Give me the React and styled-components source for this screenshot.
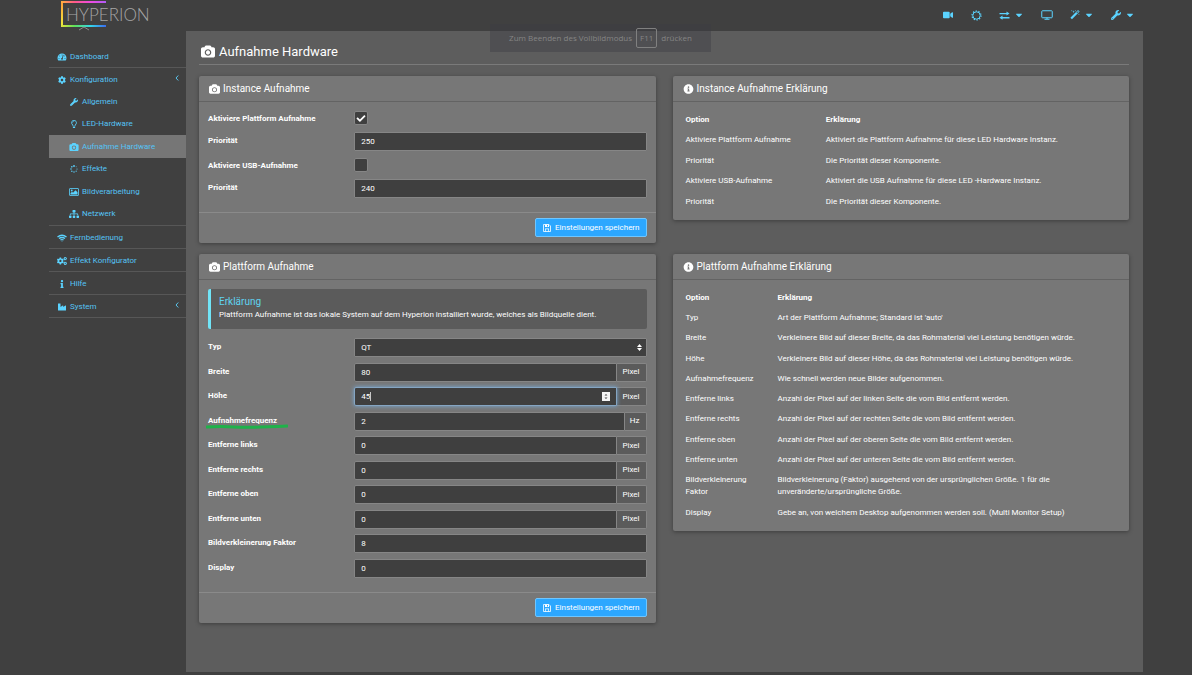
import { useState } from "react";
import styled, { createGlobalStyle, css } from "styled-components";
import {
  FaCaretDown,
  FaCheck,
  FaCog,
  FaCogs,
  FaIndustry,
  FaInfo,
  FaInfoCircle,
  FaRegLightbulb,
  FaSitemap,
  FaTachometerAlt,
  FaVideo,
  FaWrench,
} from "react-icons/fa";

const GlobalStyle = createGlobalStyle`
  * {
    box-sizing: border-box;
  }

  body {
    margin: 0;
    background: #ffffff;
    color: #ffffff;
    font: 8px/12px Roboto, "Liberation Sans", sans-serif;
  }

  button, input, select {
    font: inherit;
    color: inherit;
  }
`;

const Page = styled.div`
  display: flex;
  flex-direction: column;
  min-height: 100vh;
  margin-right: 8px;
  padding: 0 49px 3px;
  background: #404040;
`;

const Header = styled.header`
  display: flex;
  align-items: flex-start;
  justify-content: space-between;
  height: 31px;
  padding: 0 8px 0 11px;
`;

const TopNav = styled.nav`
  display: flex;
  align-items: center;
  gap: 17px;
  height: 30px;
`;

const TopButton = styled.button`
  display: flex;
  align-items: center;
  gap: 4px;
  min-width: 11px;
  padding: 0;
  border: 0;
  background: none;
  color: #5bd3ff;
  font-size: 10px;
  cursor: pointer;
`;

const Columns = styled.div`
  display: flex;
  flex: 1;
`;

const Sidebar = styled.nav`
  flex: 0 0 137px;
  padding-top: 14px;
`;

const Menu = styled.ul`
  margin: 0;
  padding: 0;
  list-style: none;
`;

const MenuItem = styled.li`
  border-bottom: 1px solid #575757;
`;

const SubMenu = styled(Menu)`
  display: grid;
  grid-auto-rows: 1fr;
  min-height: 135px;
`;

const MenuLink = styled.a`
  display: flex;
  align-items: center;
  gap: 3px;
  height: ${({ $sub }) => ($sub ? "100%" : "22px")};
  padding: 1px 7px 0 ${({ $sub }) => ($sub ? "20px" : "8px")};
  background: ${({ $active }) => ($active ? "#767676" : "none")};
  color: #55c3f5;
  text-decoration: none;

  > svg:first-child {
    width: 10px;
    height: 8px;
    color: #5bd3ff;
  }
`;

const MenuArrow = styled.svg`
  width: 4px;
  height: 6px;
  margin: 0 0 3px auto;
`;

const Content = styled.main`
  flex: 1;
  min-width: 0;
  padding: 11px 14px 14px 13px;
  background: #5d5d5d;
`;

const PageTitle = styled.h1`
  display: flex;
  align-items: center;
  gap: 4px;
  height: 23px;
  margin: 0 0 11px;
  padding: 0 2px 3px;
  border-bottom: 1px solid #7a7a7a;
  font-size: 13px;
  font-weight: 400;
  line-height: 18px;

  svg {
    width: 14px;
    height: 13px;
  }
`;

const Panels = styled.div`
  display: grid;
  grid-template-columns: 1fr 1fr;
  gap: 11px 17px;
  align-items: start;
`;

const Panel = styled.section`
  border-radius: 2px;
  background: #777777;
  box-shadow: 0 1px 4px rgba(0, 0, 0, 0.35);
`;

const PanelTitle = styled.h2`
  display: flex;
  align-items: center;
  gap: 3px;
  height: 26px;
  margin: 0;
  padding: 0 10px;
  border-bottom: 1px solid #636363;
  font-size: 10px;
  font-weight: 400;

  svg {
    width: 11px;
    height: 10px;
  }
`;

const PanelBody = styled.div`
  padding: ${({ $table }) => ($table ? "8px 9px" : "9px 9px 14px")};
`;

const PanelFooter = styled.div`
  display: flex;
  justify-content: flex-end;
  padding: 5px 9px 6px;
  border-top: 1px solid #8a8a8a;
`;

const SaveButton = styled.button`
  display: flex;
  align-items: center;
  gap: 3px;
  height: 19px;
  padding: 0 6px;
  border: 1px solid #6fc6ff;
  border-radius: 2px;
  background: #2ca7ff;
  cursor: pointer;
`;

const Callout = styled.div`
  margin-bottom: 9px;
  padding: 7px 8px;
  border-left: 3px solid #71e4f7;
  border-radius: 2px;
  background: #5b5b5b;

  h3 {
    margin: 0;
    color: #5fd3f0;
    font-size: 10px;
    font-weight: 400;
    line-height: 12px;
  }

  p {
    margin: 0;
    line-height: 14px;
  }
`;

const Fields = styled.div`
  display: flex;
  flex-direction: column;
  justify-content: space-between;
  gap: ${({ $tight }) => ($tight ? "5px" : "7px")};
  min-height: ${({ $tight }) => ($tight ? "240px" : "0")};
`;

const Row = styled.div`
  display: grid;
  grid-template-columns: 1fr 2fr;
  align-items: start;
`;

const boldText = css`
  font-weight: 700;
`;

const Label = styled.label`
  position: relative;
  justify-self: start;
  padding-top: ${({ $check }) => ($check ? "2px" : "3px")};
  ${boldText}
`;

const Marker = styled.svg`
  position: absolute;
  left: -2px;
  bottom: -3px;
  width: 82px;
  height: 6px;
`;

const Control = styled.div`
  position: relative;
  display: flex;
  height: 19px;
`;

const controlStyle = css`
  flex: 1;
  min-width: 0;
  height: 19px;
  padding: 0 6px;
  border: 1px solid #868686;
  border-radius: ${({ $joined }) => ($joined ? "2px 0 0 2px" : "1px")};
  background: #3f3f3f;
  appearance: none;
  outline: none;
`;

const TextInput = styled.input`
  ${controlStyle}
  ${({ $focused }) =>
    $focused &&
    css`
      position: relative;
      border-color: #85a5c2;
      box-shadow: 0 0 4px rgba(120, 175, 225, 0.9);
    `}
`;

const Select = styled.select`
  ${controlStyle}
`;

const Unit = styled.span`
  display: flex;
  align-items: center;
  padding: 0 6px 0 5px;
  border: 1px solid #868686;
  border-left: 0;
  border-radius: 0 2px 2px 0;
  background: #5b5b5b;
`;

const SelectArrows = styled.svg`
  position: absolute;
  top: 6px;
  right: 5px;
  width: 5px;
  height: 7px;
  pointer-events: none;
`;

const Stepper = styled.svg`
  position: absolute;
  top: 5px;
  right: 37px;
  width: 8px;
  height: 9px;
`;

const Caret = styled.span`
  position: absolute;
  top: 5px;
  left: 16px;
  width: 1px;
  height: 9px;
  background: #c8c8c8;
`;

const CheckWrap = styled.div`
  position: relative;
  display: flex;
  height: 14px;

  input {
    width: 14px;
    height: 14px;
    margin: 0;
    border: 1px solid #868686;
    border-radius: 2px;
    background: #3f3f3f;
    appearance: none;
  }

  svg {
    position: absolute;
    top: 3px;
    left: 2px;
    width: 10px;
    height: 9px;
    pointer-events: none;
  }
`;

const Table = styled.table`
  width: 100%;
  height: ${({ $rows }) => ($rows > 5 ? "235px" : "102px")};
  border-collapse: collapse;
  table-layout: fixed;

  th,
  td {
    padding: 4px;
    text-align: left;
    vertical-align: top;
  }

  th {
    ${boldText}
  }

  th:first-child {
    width: ${({ $first }) => $first};
  }
`;

const Toast = styled.div`
  position: absolute;
  top: 24px;
  left: 490px;
  display: flex;
  align-items: center;
  justify-content: center;
  gap: 4px;
  width: 221px;
  height: 28px;
  background: rgba(60, 60, 68, 0.4);
  color: #858585;
  font-family: "Open Sans", sans-serif;

  kbd {
    padding: 3px;
    border: 1px solid #808080;
    border-radius: 2px;
    font: inherit;
    line-height: 12px;
  }
`;

const topMenu = [
  { label: "Video", icon: <FaVideo /> },
  { label: "Effekte", icon: <RingIcon /> },
  { label: "Instanz", icon: <SwapIcon />, caret: true },
  { label: "Vorschau", icon: <MonitorIcon /> },
  { label: "Assistent", icon: <WandIcon />, caret: true },
  { label: "Einstellungen", icon: <FaWrench />, caret: true },
];

const menu = [
  { label: "Dashboard", icon: <FaTachometerAlt /> },
  {
    label: "Konfiguration",
    icon: <FaCog />,
    arrow: true,
    children: [
      { label: "Allgemein", icon: <FaWrench /> },
      { label: "LED-Hardware", icon: <FaRegLightbulb /> },
      { label: "Aufnahme Hardware", icon: <CameraIcon />, active: true },
      { label: "Effekte", icon: <SpinnerIcon /> },
      { label: "Bildverarbeitung", icon: <PictureIcon /> },
      { label: "Netzwerk", icon: <FaSitemap /> },
    ],
  },
  { label: "Fernbedienung", icon: <WifiIcon /> },
  { label: "Effekt Konfigurator", icon: <FaCogs /> },
  { label: "Hilfe", icon: <FaInfo /> },
  { label: "System", icon: <FaIndustry />, arrow: true },
];

const platformFields = [
  { id: "width", label: "Breite", value: "80", unit: "Pixel" },
  { id: "height", label: "Höhe", value: "45", unit: "Pixel", focused: true },
  { id: "freq", label: "Aufnahmefrequenz", value: "2", unit: "Hz", marked: true },
  { id: "left", label: "Entferne links", value: "0", unit: "Pixel" },
  { id: "right", label: "Entferne rechts", value: "0", unit: "Pixel" },
  { id: "top", label: "Entferne oben", value: "0", unit: "Pixel" },
  { id: "bottom", label: "Entferne unten", value: "0", unit: "Pixel" },
  { id: "decimation", label: "Bildverkleinerung Faktor", value: "8" },
  { id: "display", label: "Display", value: "0" },
];

const instanceHelp = [
  ["Aktiviere Plattform Aufnahme", "Aktiviert die Plattform Aufnahme für diese LED Hardware Instanz."],
  ["Priorität", "Die Priorität dieser Komponente."],
  ["Aktiviere USB-Aufnahme", "Aktiviert die USB Aufnahme für diese LED -Hardware Instanz."],
  ["Priorität", "Die Priorität dieser Komponente."],
];

const platformHelp = [
  ["Typ", "Art der Plattform Aufnahme; Standard ist 'auto'"],
  ["Breite", "Verkleinere Bild auf dieser Breite, da das Rohmaterial viel Leistung benötigen würde."],
  ["Höhe", "Verkleinere Bild auf dieser Höhe, da das Rohmaterial viel Leistung benötigen würde."],
  ["Aufnahmefrequenz", "Wie schnell werden neue Bilder aufgenommen."],
  ["Entferne links", "Anzahl der Pixel auf der linken Seite die vom Bild entfernt werden."],
  ["Entferne rechts", "Anzahl der Pixel auf der rechten Seite die vom Bild entfernt werden."],
  ["Entferne oben", "Anzahl der Pixel auf der oberen Seite die vom Bild entfernt werden."],
  ["Entferne unten", "Anzahl der Pixel auf der unteren Seite die vom Bild entfernt werden."],
  [
    "Bildverkleinerung Faktor",
    "Bildverkleinerung (Faktor) ausgehend von der ursprünglichen Größe. 1 für die unveränderte/ursprüngliche Größe.",
  ],
  ["Display", "Gebe an, von welchem Desktop aufgenommen werden soll. (Multi Monitor Setup)"],
];

function CameraIcon() {
  return (
    <svg viewBox="0 192 1920 1664" fill="currentColor" aria-hidden="true">
      <path d="M960 864q119 0 203.500 84.500t84.500 203.500-84.500 203.500-203.500 84.500-203.500-84.500-84.500-203.500 84.500-203.500 203.500-84.500zm704-416q106 0 181 75t75 181v896q0 106-75 181t-181 75h-1408q-106 0-181-75t-75-181v-896q0-106 75-181t181-75h224l51-136q19-49 69.500-84.500t103.500-35.500h512q53 0 103.500 35.500t69.500 84.500l51 136h224zm-704 1152q185 0 316.500-131.500t131.500-316.500-131.500-316.500-316.500-131.500-316.500 131.500-131.500 316.500 131.500 316.500 316.500 131.500z" />
    </svg>
  );
}

function WandIcon() {
  return (
    <svg width="10" height="10" viewBox="0 0 1792 1792" fill="currentColor" aria-hidden="true">
      <path d="M1254 581l293-293-107-107-293 293zm447-293q0 27-18 45l-1286 1286q-18 18-45 18t-45-18l-198-198q-18-18-18-45t18-45l1286-1286q18-18 45-18t45 18l198 198q18 18 18 45zm-1351-190l98 30-98 30-30 98-30-98-98-30 98-30 30-98zm350 162l196 60-196 60-60 196-60-196-196-60 196-60 60-196zm930 478l98 30-98 30-30 98-30-98-98-30 98-30 30-98zm-640-640l98 30-98 30-30 98-30-98-98-30 98-30 30-98z" />
    </svg>
  );
}

function RingIcon() {
  return (
    <svg width="11" height="11" viewBox="0 0 22 22" fill="none" stroke="currentColor" aria-hidden="true">
      <circle cx="11" cy="11" r="7.4" strokeWidth="2" />
      <circle cx="11" cy="11" r="9" strokeWidth="2.4" strokeDasharray="2.6 3.05" />
    </svg>
  );
}

function SwapIcon() {
  return (
    <svg width="11" height="9" viewBox="0 0 22 18" fill="currentColor" aria-hidden="true">
      <path d="M1 4h14V1l6 4-6 4V6.500H1zM21 12H7V9l-6 4.500 6 4V15h14z" />
    </svg>
  );
}

function MonitorIcon() {
  return (
    <svg width="12" height="10" viewBox="0 0 24 20" fill="none" stroke="currentColor" aria-hidden="true">
      <rect x="1.500" y="1.500" width="21" height="14" rx="1.500" strokeWidth="2" />
      <path d="M12 15v3M7 18.500h10" strokeWidth="2" />
    </svg>
  );
}

function SpinnerIcon() {
  return (
    <svg viewBox="0 0 20 20" fill="currentColor" aria-hidden="true">
      <circle cx="10" cy="2.500" r="2.200" />
      <circle cx="15.400" cy="4.600" r="1.200" />
      <circle cx="17.500" cy="10" r="1.400" />
      <circle cx="15.400" cy="15.400" r="1.500" />
      <circle cx="10" cy="17.500" r="1.700" />
      <circle cx="4.600" cy="15.400" r="1.800" />
      <circle cx="2.500" cy="10" r="1.900" />
      <circle cx="4.600" cy="4.600" r="2" />
    </svg>
  );
}

function PictureIcon() {
  return (
    <svg viewBox="0 0 20 16" fill="currentColor" aria-hidden="true">
      <rect x="1" y="1" width="18" height="14" rx="1" fill="none" stroke="currentColor" strokeWidth="1.600" />
      <circle cx="5.500" cy="5" r="1.800" />
      <path d="M3 13v-2.500l3-3 2 2L13 4.500l4 4V13z" />
    </svg>
  );
}

function WifiIcon() {
  return (
    <svg viewBox="0 0 20 16" fill="none" stroke="currentColor" aria-hidden="true">
      <path d="M1 6q9-7 18 0" strokeWidth="2.600" />
      <path d="M4 9.200q6-4.500 12 0" strokeWidth="2.600" />
      <path d="M6.800 12.200q3.200-2.400 6.400 0" strokeWidth="2.400" />
      <path d="M8.500 13.500h3L10 15.500z" fill="currentColor" stroke="none" />
    </svg>
  );
}

function FloppyIcon() {
  return (
    <svg width="10" height="8" viewBox="0 0 16 16" fill="currentColor" aria-hidden="true">
      <path d="M1 1h11l3 3v11H1z" fill="none" stroke="currentColor" strokeWidth="1.600" />
      <path d="M4 1h8v5H4zm4 1v3h2V2zM4 9h8v6h-1.400v-4.500H5.400V15H4z" fillRule="evenodd" />
    </svg>
  );
}

function Logo() {
  return (
    <svg width="90" height="31" viewBox="0 0 90 31" role="img" aria-label="Hyperion">
      <defs>
        <linearGradient id="top" x1="0" x2="1">
          <stop offset="0" stopColor="#ffb03a" />
          <stop offset="0.300" stopColor="#ff5a8a" />
          <stop offset="0.650" stopColor="#f04be0" />
          <stop offset="1" stopColor="#b05cf5" />
        </linearGradient>
        <linearGradient id="bottom" x1="0" x2="1">
          <stop offset="0" stopColor="#e8e23a" />
          <stop offset="0.300" stopColor="#5ee05a" />
          <stop offset="0.650" stopColor="#35d8e8" />
          <stop offset="1" stopColor="#3a6cf0" />
        </linearGradient>
        <linearGradient id="side" x1="0" x2="0" y1="0" y2="1">
          <stop offset="0" stopColor="#ff9a3a" />
          <stop offset="1" stopColor="#eeee3a" />
        </linearGradient>
      </defs>
      <rect x="1" y="1" width="2" height="26" fill="url(#side)" />
      <rect x="1" y="1" width="45" height="2" fill="url(#top)" />
      <rect x="1" y="25" width="45" height="2" fill="url(#bottom)" />
      <path d="M19 30l5-3 5 3" fill="none" stroke="#8c8c8c" />
      <text x="6" y="21" fill="#a6a6a6" fontFamily="Lato, sans-serif" fontWeight="300" fontSize="17">
        HYPERION
      </text>
    </svg>
  );
}

function MenuEntry({ item, sub }) {
  return (
    <MenuLink href="#" $sub={sub} $active={item.active}>
      {item.icon}
      <span>{item.label}</span>
      {item.arrow && (
        <MenuArrow viewBox="0 0 8 12" aria-hidden="true">
          <path d="M6.500 1L2 6l4.500 5" fill="none" stroke="#5bd3ff" strokeWidth="1.800" />
        </MenuArrow>
      )}
    </MenuLink>
  );
}

function CheckField({ id, label, initial }) {
  const [checked, setChecked] = useState(initial);

  return (
    <Row>
      <Label htmlFor={id} $check>
        {label}
      </Label>
      <CheckWrap>
        <input id={id} type="checkbox" checked={checked} onChange={() => setChecked(!checked)} />
        {checked && <FaCheck />}
      </CheckWrap>
    </Row>
  );
}

function TextField({ field }) {
  return (
    <Row>
      <Label htmlFor={field.id}>
        {field.label}
        {field.marked && (
          <Marker viewBox="0 0 82 6" aria-hidden="true">
            <path d="M1 3q14-1 27 0t53-1" fill="none" stroke="#1fb24a" strokeWidth="3" strokeLinecap="round" />
          </Marker>
        )}
      </Label>
      <Control>
        <TextInput
          id={field.id}
          type="text"
          inputMode="numeric"
          defaultValue={field.value}
          $joined={Boolean(field.unit)}
          $focused={field.focused}
        />
        {field.focused && (
          <>
            <Caret />
            <Stepper viewBox="0 0 16 18" aria-hidden="true">
              <rect width="16" height="18" fill="#f4f4f4" />
              <path d="M5 7l3-3 3 3zM5 11l3 3 3-3z" fill="#444444" />
            </Stepper>
          </>
        )}
        {field.unit && <Unit>{field.unit}</Unit>}
      </Control>
    </Row>
  );
}

function Footer() {
  return (
    <PanelFooter>
      <SaveButton type="button">
        <FloppyIcon />
        Einstellungen speichern
      </SaveButton>
    </PanelFooter>
  );
}

function HelpPanel({ title, rows, first }) {
  return (
    <Panel>
      <PanelTitle>
        <FaInfoCircle />
        {title}
      </PanelTitle>
      <PanelBody $table>
        <Table $first={first} $rows={rows.length}>
          <thead>
            <tr>
              <th>Option</th>
              <th>Erklärung</th>
            </tr>
          </thead>
          <tbody>
            {rows.map(([option, text], index) => (
              <tr key={index}>
                <td>{option}</td>
                <td>{text}</td>
              </tr>
            ))}
          </tbody>
        </Table>
      </PanelBody>
    </Panel>
  );
}

function App() {
  return (
    <>
      <GlobalStyle />
      <Page>
        <Header>
          <Logo />
          <TopNav>
            {topMenu.map((item) => (
              <TopButton key={item.label} type="button" aria-label={item.label}>
                {item.icon}
                {item.caret && <FaCaretDown />}
              </TopButton>
            ))}
          </TopNav>
        </Header>

        <Columns>
          <Sidebar>
            <Menu>
              {menu.map((item) => (
                <MenuItem key={item.label}>
                  <MenuEntry item={item} />
                  {item.children && (
                    <SubMenu>
                      {item.children.map((child) => (
                        <li key={child.label}>
                          <MenuEntry item={child} sub />
                        </li>
                      ))}
                    </SubMenu>
                  )}
                </MenuItem>
              ))}
            </Menu>
          </Sidebar>

          <Content>
            <PageTitle>
              <CameraIcon />
              Aufnahme Hardware
            </PageTitle>

            <Panels>
              <Panel>
                <PanelTitle>
                  <CameraIcon />
                  Instance Aufnahme
                </PanelTitle>
                <PanelBody>
                  <Fields>
                    <CheckField id="platformEnable" label="Aktiviere Plattform Aufnahme" initial={true} />
                    <TextField field={{ id: "platformPrio", label: "Priorität", value: "250" }} />
                    <CheckField id="usbEnable" label="Aktiviere USB-Aufnahme" initial={false} />
                    <TextField field={{ id: "usbPrio", label: "Priorität", value: "240" }} />
                  </Fields>
                </PanelBody>
                <Footer />
              </Panel>

              <HelpPanel title="Instance Aufnahme Erklärung" rows={instanceHelp} first="32%" />

              <Panel>
                <PanelTitle>
                  <CameraIcon />
                  Plattform Aufnahme
                </PanelTitle>
                <PanelBody>
                  <Callout>
                    <h3>Erklärung</h3>
                    <p>
                      Plattform Aufnahme ist das lokale System auf dem Hyperion installiert wurde, welches als
                      Bildquelle dient.
                    </p>
                  </Callout>
                  <Fields $tight>
                    <Row>
                      <Label htmlFor="type">Typ</Label>
                      <Control>
                        <Select id="type" defaultValue="QT">
                          <option>QT</option>
                          <option>auto</option>
                        </Select>
                        <SelectArrows viewBox="0 0 10 14" aria-hidden="true">
                          <path d="M0 6l5-6 5 6zM0 8l5 6 5-6z" fill="#ffffff" />
                        </SelectArrows>
                      </Control>
                    </Row>
                    {platformFields.map((field) => (
                      <TextField key={field.id} field={field} />
                    ))}
                  </Fields>
                </PanelBody>
                <Footer />
              </Panel>

              <HelpPanel title="Plattform Aufnahme Erklärung" rows={platformHelp} first="21%" />
            </Panels>
          </Content>
        </Columns>
      </Page>

      <Toast>
        <span>Zum Beenden des Vollbildmodus</span>
        <kbd>F11</kbd>
        <span>drücken</span>
      </Toast>
    </>
  );
}

export default App;
